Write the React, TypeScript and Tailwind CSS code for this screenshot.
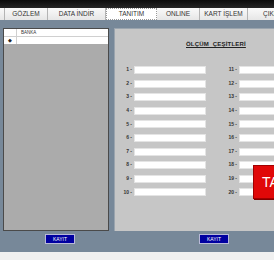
const tabs = [
  { label: '', w: 'w-[5px]' },
  { label: 'GÖZLEM', w: 'w-[43px]' },
  { label: 'DATA İNDİR', w: 'w-[58px]' },
  { label: 'TANITIM', w: 'w-[51px]', active: true },
  { label: 'ONLINE', w: 'w-[43px]' },
  { label: 'KART İŞLEM', w: 'w-[48px]' },
  { label: 'ÇIKIŞ', w: 'w-[48px]' },
]

const left = [1, 2, 3, 4, 5, 6, 7, 8, 9, 10]
const right = [11, 12, 13, 14, 15, 16, 17, 18, 19, 20]

const Field = ({ n }: { n: number }) => (
  <div className="flex items-center h-[8px]">
    <span className="w-[19px] text-right pr-[2px] text-[5px] font-bold text-[#333]">{n} -</span>
    <div className="w-[72px] h-[8px] bg-white border border-[#e4e4e4]" />
  </div>
)

const Kayit = () => (
  <button className="w-[30px] h-[10px] bg-[#0000a0] border border-[#b8b8d8] text-white text-[5px] leading-none">
    KAYIT
  </button>
)

export default function App() {
  return (
    <div
      className="w-[274px] h-[260px] overflow-hidden flex flex-col bg-[#f0f0f0]"
      style={{ fontFamily: '"Liberation Sans", Arial, sans-serif' }}
    >
      <div className="h-[8px] shrink-0 bg-gradient-to-b from-[#0c0c0c] to-[#262626]" />

      <div className="h-[12px] shrink-0 flex bg-[#f0f0f0]">
        {tabs.map((t) => (
          <div
            key={t.label || 'x'}
            className={
              'shrink-0 flex items-center justify-center text-[6.5px] text-[#333] ' +
              t.w +
              (t.active
                ? ' bg-white border border-dotted border-[#999]'
                : ' bg-gradient-to-b from-[#fafafa] to-[#e6e6e6] border-r border-[#b4b4b4]')
            }
          >
            {t.label}
          </div>
        ))}
      </div>

      <div className="flex-1 bg-[#778899] flex pt-[8px] pl-[3px]">
        <div className="w-[106px] shrink-0 flex flex-col">
          <div className="h-[203px] bg-[#ababab] border border-[#4a4a4a] flex flex-col">
            <div className="h-[8px] flex bg-white border-b border-[#d0d0d0]">
              <div className="w-[13px] border-r border-[#d0d0d0]" />
              <div className="pl-[4px] text-[4.5px] leading-[8px] text-[#333]">BANKA</div>
            </div>
            <div className="h-[7px] flex bg-white">
              <div className="w-[13px] border-r border-[#d0d0d0] flex items-center justify-center text-[5px] text-[#222]">
                ◆
              </div>
            </div>
          </div>
          <div className="flex justify-center pl-[8px] mt-[3px]">
            <Kayit />
          </div>
        </div>

        <div className="ml-[5px] w-[200px] shrink-0 flex flex-col relative">
          <div className="h-[203px] bg-[#c6c6c6] border-l border-t border-[#9aa4ae] flex flex-col">
            <div className="pt-[11px] pl-[71px] text-[6px] font-bold underline text-[#222] tracking-[0.2px]">
              ÖLÇÜM&nbsp; ÇEŞİTLERİ
            </div>
            <div className="mt-[17px] flex">
              <div className="flex flex-col gap-[5.6px]">
                {left.map((n) => (
                  <Field key={n} n={n} />
                ))}
              </div>
              <div className="flex flex-col gap-[5.6px] ml-[14px]">
                {right.map((n) => (
                  <Field key={n} n={n} />
                ))}
              </div>
            </div>
          </div>
          <div className="flex pl-[85px] mt-[3px]">
            <Kayit />
          </div>

          <div className="absolute left-[139px] top-[137px] w-[80px] h-[34px] bg-[#e00808] border border-[#a00000] shadow-[1px_1px_0_#800000] text-white text-[14px] pl-[8px] flex items-center">
            TANIMLA
          </div>
        </div>
      </div>

      <div className="h-[8px] shrink-0 bg-[#f0f0f0]" />
    </div>
  )
}
